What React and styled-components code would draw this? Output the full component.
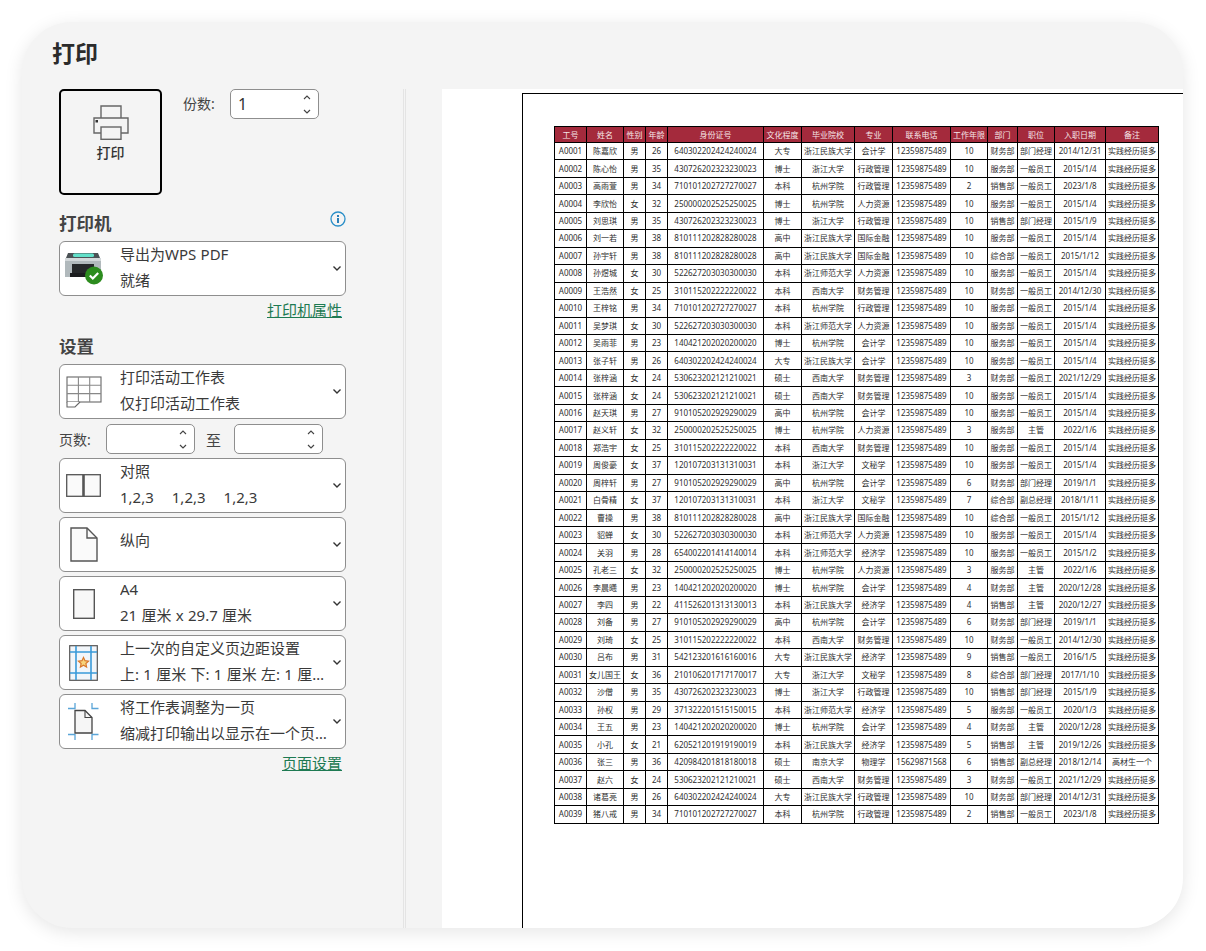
import React from 'react'
import styled, { createGlobalStyle } from 'styled-components'

const GlobalStyle = createGlobalStyle`
  html, body {
    margin: 0;
    padding: 0;
    background: #fff;
    overflow: hidden;
  }
  * {
    box-sizing: border-box;
  }
  body {
    font-family: "Noto Sans", "Noto Sans CJK SC", sans-serif;
    color: #333;
  }
`

const Win = styled.div`
  display: flex;
  width: 1161px;
  height: 906px;
  margin: 22px 0 23px 22px;
  background: #f4f4f4;
  border-radius: 50px;
  overflow: hidden;
  box-shadow: 0 4px 18px rgba(0, 0, 0, 0.1);
`

const Side = styled.aside`
  flex: none;
  width: 381px;
  padding: 15px 0 0 37px;
`

const Title = styled.h1`
  margin: 0 0 19px -7px;
  font-size: 23px;
  line-height: 33px;
  font-weight: 700;
  color: #2b2b2b;
`

const TopRow = styled.div`
  display: flex;
  align-items: flex-start;
`

const PrintButton = styled.button`
  display: flex;
  flex-direction: column;
  align-items: center;
  width: 103px;
  height: 106px;
  padding: 14px 0 0;
  border: 2px solid #000;
  border-radius: 5px;
  background: #f4f4f4;
  font: 500 14px/20px "Noto Sans", "Noto Sans CJK SC", sans-serif;
  color: #333;
  svg {
    margin-bottom: 3px;
  }
`

const Copies = styled.div`
  display: flex;
  align-items: flex-start;
  margin-left: 21px;
  font-size: 14px;
  line-height: 30px;
  color: #444;
  > span {
    width: 47px;
  }
`

const Spin = styled.div`
  display: flex;
  align-items: center;
  justify-content: space-between;
  width: 89px;
  height: 30px;
  padding: 0 7px;
  border: 1px solid #8e8e8e;
  border-radius: 5px;
  background: #fff;
  font-size: 16px;
  color: #333;
`

const SpinArrows = styled.div`
  display: flex;
  flex-direction: column;
  gap: 9px;
  margin-left: auto;
  svg {
    display: block;
  }
`

const SectionHead = styled.div`
  display: flex;
  align-items: center;
  justify-content: space-between;
  width: 287px;
  margin-top: ${p => p.$top}px;
  margin-bottom: 5px;
  font-size: 17.5px;
  line-height: 26px;
  font-weight: 700;
  color: #444;
  svg {
    margin-top: -9px;
  }
`

const SelectBox = styled.div`
  display: flex;
  align-items: center;
  width: 287px;
  height: 55px;
  margin-top: 4px;
  border: 1px solid #8e8e8e;
  border-radius: 6px;
  background: #fff;
`

const IconSlot = styled.div`
  flex: none;
  display: flex;
  justify-content: center;
  width: 47px;
  margin-right: 13px;
`

const Lines = styled.div`
  flex: none;
  width: 210px;
  margin-bottom: ${p => (p.$single ? 10 : 4)}px;
  font-size: 15px;
  line-height: 26px;
  word-spacing: 0.4px;
  color: #3a3a3a;
`

const Line = styled.div`
  white-space: nowrap;
  overflow: hidden;
  text-overflow: ellipsis;
`

const Collate = styled.div`
  display: flex;
  gap: 18px;
`

const Chevron = styled.div`
  flex: none;
  display: flex;
  margin-left: 2px;
`

const LinkRow = styled.div`
  display: flex;
  justify-content: flex-end;
  width: 283px;
  margin-top: ${p => p.$top}px;
`

const Link = styled.a`
  font-size: 15px;
  line-height: 20px;
  color: #1d7a52;
  text-decoration: underline;
`

const PagesRow = styled.div`
  display: flex;
  align-items: center;
  height: 30px;
  margin-top: 5px;
  font-size: 14px;
  color: #444;
`

const PagesLabel = styled.span`
  width: 47px;
`

const PagesTo = styled.span`
  width: 39px;
  padding-left: 11px;
  font-size: 15px;
`

const Preview = styled.main`
  flex: 1;
  min-width: 0;
  padding-top: 67px;
  overflow: hidden;
`

const PreviewPane = styled.div`
  height: 100%;
  padding-left: 36px;
  border-left: 3px double #e4e4e4;
`

const Paper = styled.div`
  height: 100%;
  padding: 4px 0 0 80px;
  background: #fff;
`

const Sheet = styled.div`
  height: 100%;
  padding: 32px 0 0 31px;
  border-top: 1px solid #000;
  border-left: 1px solid #000;
`

const Table = styled.table`
  width: 604px;
  table-layout: fixed;
  border-collapse: collapse;
  font-size: 8px;
  line-height: 10px;
  color: #2e2e2e;
`

const Th = styled.th`
  height: 16px;
  padding: 0;
  border: 1px solid #000;
  background: #a42a3c;
  color: #f6e6e8;
  font-weight: 400;
  text-align: center;
  white-space: nowrap;
`

const Td = styled.td`
  height: 17.46px;
  padding: 0;
  border: 1px solid #000;
  text-align: center;
  white-space: nowrap;
  overflow: hidden;
`

const columns = [32, 37, 22, 22, 96, 38, 53, 38, 58, 37, 30, 37, 51, 53]

const heads = ['工号', '姓名', '性别', '年龄', '身份证号', '文化程度', '毕业院校', '专业', '联系电话', '工作年限', '部门', '职位', '入职日期', '备注']

const rows = `A0001 陈嘉欣 男 26 640302202424240024 大专 浙江民族大学 会计学 12359875489 10 财务部 部门经理 2014/12/31 实践经历挺多
A0002 陈心怡 男 35 430726202323230023 博士 浙江大学 行政管理 12359875489 10 服务部 一般员工 2015/1/4 实践经历挺多
A0003 高雨萱 男 34 710101202727270027 本科 杭州学院 行政管理 12359875489 2 销售部 一般员工 2023/1/8 实践经历挺多
A0004 李欣怡 女 32 250000202525250025 博士 杭州学院 人力资源 12359875489 10 服务部 一般员工 2015/1/4 实践经历挺多
A0005 刘思琪 男 35 430726202323230023 博士 浙江大学 行政管理 12359875489 10 销售部 部门经理 2015/1/9 实践经历挺多
A0006 刘一若 男 38 810111202828280028 高中 浙江民族大学 国际金融 12359875489 10 服务部 一般员工 2015/1/4 实践经历挺多
A0007 孙宇轩 男 38 810111202828280028 高中 浙江民族大学 国际金融 12359875489 10 综合部 一般员工 2015/1/12 实践经历挺多
A0008 孙煜城 女 30 522627203030300030 本科 浙江师范大学 人力资源 12359875489 10 服务部 一般员工 2015/1/4 实践经历挺多
A0009 王浩然 女 25 310115202222220022 本科 西南大学 财务管理 12359875489 10 财务部 一般员工 2014/12/30 实践经历挺多
A0010 王梓铭 男 34 710101202727270027 本科 杭州学院 行政管理 12359875489 10 服务部 一般员工 2015/1/4 实践经历挺多
A0011 吴梦琪 女 30 522627203030300030 本科 浙江师范大学 人力资源 12359875489 10 服务部 一般员工 2015/1/4 实践经历挺多
A0012 吴雨菲 男 23 140421202020200020 博士 杭州学院 会计学 12359875489 10 服务部 一般员工 2015/1/4 实践经历挺多
A0013 张子轩 男 26 640302202424240024 大专 浙江民族大学 会计学 12359875489 10 服务部 一般员工 2015/1/4 实践经历挺多
A0014 张梓涵 女 24 530623202121210021 硕士 西南大学 财务管理 12359875489 3 财务部 一般员工 2021/12/29 实践经历挺多
A0015 张梓涵 女 24 530623202121210021 硕士 西南大学 财务管理 12359875489 10 服务部 一般员工 2015/1/4 实践经历挺多
A0016 赵天琪 男 27 910105202929290029 高中 杭州学院 会计学 12359875489 10 服务部 一般员工 2015/1/4 实践经历挺多
A0017 赵义轩 女 32 250000202525250025 博士 杭州学院 人力资源 12359875489 3 服务部 主管 2022/1/6 实践经历挺多
A0018 郑浩宇 女 25 310115202222220022 本科 西南大学 财务管理 12359875489 10 服务部 一般员工 2015/1/4 实践经历挺多
A0019 周俊豪 女 37 120107203131310031 本科 浙江大学 文秘学 12359875489 10 服务部 一般员工 2015/1/4 实践经历挺多
A0020 周梓轩 男 27 910105202929290029 高中 杭州学院 会计学 12359875489 6 财务部 部门经理 2019/1/1 实践经历挺多
A0021 白骨精 女 37 120107203131310031 本科 浙江大学 文秘学 12359875489 7 综合部 副总经理 2018/1/11 实践经历挺多
A0022 曹操 男 38 810111202828280028 高中 浙江民族大学 国际金融 12359875489 10 综合部 一般员工 2015/1/12 实践经历挺多
A0023 貂蝉 女 30 522627203030300030 本科 浙江师范大学 人力资源 12359875489 10 服务部 一般员工 2015/1/4 实践经历挺多
A0024 关羽 男 28 654002201414140014 本科 浙江师范大学 经济学 12359875489 10 服务部 一般员工 2015/1/2 实践经历挺多
A0025 孔老三 女 32 250000202525250025 博士 杭州学院 人力资源 12359875489 3 服务部 主管 2022/1/6 实践经历挺多
A0026 李晨曦 男 23 140421202020200020 博士 杭州学院 会计学 12359875489 4 财务部 主管 2020/12/28 实践经历挺多
A0027 李四 男 22 411526201313130013 本科 浙江民族大学 经济学 12359875489 4 销售部 主管 2020/12/27 实践经历挺多
A0028 刘备 男 27 910105202929290029 高中 杭州学院 会计学 12359875489 6 财务部 部门经理 2019/1/1 实践经历挺多
A0029 刘琦 女 25 310115202222220022 本科 西南大学 财务管理 12359875489 10 财务部 一般员工 2014/12/30 实践经历挺多
A0030 吕布 男 31 542123201616160016 大专 浙江民族大学 经济学 12359875489 9 销售部 一般员工 2016/1/5 实践经历挺多
A0031 女儿国王 女 36 210106201717170017 大专 浙江大学 文秘学 12359875489 8 综合部 部门经理 2017/1/10 实践经历挺多
A0032 沙僧 男 35 430726202323230023 博士 浙江大学 行政管理 12359875489 10 销售部 部门经理 2015/1/9 实践经历挺多
A0033 孙权 男 29 371322201515150015 本科 浙江师范大学 经济学 12359875489 5 服务部 一般员工 2020/1/3 实践经历挺多
A0034 王五 男 23 140421202020200020 博士 杭州学院 会计学 12359875489 4 财务部 主管 2020/12/28 实践经历挺多
A0035 小孔 女 21 620521201919190019 本科 浙江民族大学 经济学 12359875489 5 销售部 主管 2019/12/26 实践经历挺多
A0036 张三 男 36 420984201818180018 硕士 南京大学 物理学 15629871568 6 销售部 副总经理 2018/12/14 高材生一个
A0037 赵六 女 24 530623202121210021 硕士 西南大学 财务管理 12359875489 3 财务部 一般员工 2021/12/29 实践经历挺多
A0038 诸葛亮 男 26 640302202424240024 大专 浙江民族大学 行政管理 12359875489 10 财务部 部门经理 2014/12/31 实践经历挺多
A0039 猪八戒 男 34 710101202727270027 本科 杭州学院 行政管理 12359875489 2 销售部 一般员工 2023/1/8 实践经历挺多`
  .split('\n')
  .map(r => r.split(' '))

const ChevronDown = () =>
  <svg width="10" height="7" viewBox="0 0 10 7">
    <path d="M1.5 1.5 5 5l3.5-3.5" fill="none" stroke="#333" strokeWidth="1.4" />
  </svg>

const ArrowUp = () =>
  <svg width="8" height="5" viewBox="0 0 8 5">
    <path d="M1 4 4 1l3 3" fill="none" stroke="#444" strokeWidth="1.1" />
  </svg>

const ArrowDown = () =>
  <svg width="8" height="5" viewBox="0 0 8 5">
    <path d="M1 1l3 3 3-3" fill="none" stroke="#444" strokeWidth="1.2" />
  </svg>

const SpinBox = ({ value }) =>
  <Spin>
    <span>{value}</span>
    <SpinArrows>
      <ArrowUp />
      <ArrowDown />
    </SpinArrows>
  </Spin>

const PrinterOutline = () =>
  <svg width="36" height="35" viewBox="0 0 36 35" fill="none" stroke="#666" strokeWidth="1.4">
    <path d="M8 13V1h20v12" />
    <path d="M8 28H1V13h34v15h-7" />
    <rect x="8" y="22" width="20" height="12.3" fill="#f4f4f4" />
    <rect x="2.5" y="15" width="2.5" height="2.5" fill="#333" stroke="none" />
  </svg>

const PrinterColor = () =>
  <svg width="40" height="33" viewBox="0 0 40 33">
    <path d="M2 6 4 1h30l2 5z" fill="#4b5255" />
    <rect x="9" y="1.5" width="21" height="3.5" rx="1.5" fill="#62e0c9" />
    <rect x="1" y="6" width="36" height="19" fill="#b1b9bc" />
    <rect x="1" y="6" width="36" height="3" fill="#d3d8da" />
    <rect x="8" y="12" width="22" height="9" fill="#26282a" />
    <rect x="6" y="21" width="26" height="4" fill="#1b1c1e" />
    <circle cx="30" cy="23.5" r="9" fill="#2c8c1e" />
    <path d="M25.8 23.5l3 3 5.4-5.6" fill="none" stroke="#fff" strokeWidth="2.2" />
  </svg>

const InfoIcon = () =>
  <svg width="16" height="16" viewBox="0 0 16 16">
    <circle cx="8" cy="8" r="7" fill="none" stroke="#2b8fc8" strokeWidth="1.3" />
    <rect x="7" y="7" width="2" height="5" fill="#2b7fb8" />
    <rect x="7" y="4" width="2" height="2" fill="#2b7fb8" />
  </svg>

const SheetsIcon = () =>
  <svg width="36" height="32" viewBox="0 0 36 32" fill="none" stroke="#666" strokeWidth="1.1">
    <rect x="1" y="1" width="34" height="25" />
    <path d="M12.4 1v25M23.7 1v25M1 9.3h34M1 17.6h34" stroke="#888" />
    <path d="M1 26v5h8l5-5" fill="#fff" />
  </svg>

const CollateIcon = () =>
  <svg width="35" height="23" viewBox="0 0 35 23" fill="#fafafa" stroke="#555" strokeWidth="1.3">
    <rect x="0.7" y="0.7" width="33.6" height="21.6" />
    <path d="M17.5 0.7v21.6" strokeWidth="2.6" />
  </svg>

const PortraitIcon = () =>
  <svg width="28" height="35" viewBox="0 0 28 35" fill="#fafafa" stroke="#555" strokeWidth="1.4">
    <path d="M1 1h16l10 10v23H1z" />
    <path d="M17 1v10h10" fill="none" />
  </svg>

const SheetSizeIcon = () =>
  <svg width="22" height="30" viewBox="0 0 22 30" fill="#f8f8f8" stroke="#555" strokeWidth="1.4">
    <rect x="0.7" y="0.7" width="20.6" height="28.6" />
  </svg>

const MarginsIcon = () =>
  <svg width="29" height="36" viewBox="0 0 29 36" fill="none">
    <rect x="0.7" y="0.7" width="27.6" height="34.6" fill="#f2f6fa" stroke="#555" strokeWidth="1.2" />
    <path d="M7 1v34M22 1v34M1 7h27M1 28h27" stroke="#3a9ad9" strokeWidth="1.6" />
    <path d="M14.5 12.5l1.5 3.2 3.5.4-2.6 2.4.7 3.5-3.1-1.7-3.1 1.7.7-3.5-2.6-2.4 3.5-.4z" fill="#f7d47c" stroke="#d9772b" strokeWidth="1.2" />
  </svg>

const FitIcon = () =>
  <svg width="31" height="37" viewBox="0 0 31 37" fill="none">
    <path d="M0 5.5h7V0M24 0v5.5h6.5M0 31.5h7V37M24 37v-5.5h6.5" stroke="#5aa5d8" strokeWidth="1.3" />
    <path d="M7 7.5h10l7 7v15.5H7z" fill="#f6f6f6" stroke="#444" strokeWidth="1.3" />
    <path d="M17 7.5v7h7" stroke="#444" strokeWidth="1.1" />
  </svg>

const Select = ({ icon, single, children }) =>
  <SelectBox>
    <IconSlot>{icon}</IconSlot>
    <Lines $single={single}>{children}</Lines>
    <Chevron><ChevronDown /></Chevron>
  </SelectBox>

export default function App() {
  return (
    <Win>
      <GlobalStyle />
      <Side>
        <Title>打印</Title>
        <TopRow>
          <PrintButton>
            <PrinterOutline />
            打印
          </PrintButton>
          <Copies>
            <span>份数:</span>
            <SpinBox value="1" />
          </Copies>
        </TopRow>

        <SectionHead $top={15}>
          打印机
          <InfoIcon />
        </SectionHead>
        <Select icon={<PrinterColor />}>
          <Line>导出为WPS PDF</Line>
          <Line>就绪</Line>
        </Select>
        <LinkRow $top={4}><Link>打印机属性</Link></LinkRow>

        <SectionHead $top={13}>设置</SectionHead>
        <Select icon={<SheetsIcon />}>
          <Line>打印活动工作表</Line>
          <Line>仅打印活动工作表</Line>
        </Select>
        <PagesRow>
          <PagesLabel>页数:</PagesLabel>
          <SpinBox value="" />
          <PagesTo>至</PagesTo>
          <SpinBox value="" />
        </PagesRow>
        <Select icon={<CollateIcon />}>
          <Line>对照</Line>
          <Collate>
            <span>1,2,3</span>
            <span>1,2,3</span>
            <span>1,2,3</span>
          </Collate>
        </Select>
        <Select icon={<PortraitIcon />} single>
          <Line>纵向</Line>
        </Select>
        <Select icon={<SheetSizeIcon />}>
          <Line>A4</Line>
          <Line>21 厘米 x 29.7 厘米</Line>
        </Select>
        <Select icon={<MarginsIcon />}>
          <Line>上一次的自定义页边距设置</Line>
          <Line>上: 1 厘米 下: 1 厘米 左: 1 厘米 右: 1 厘米</Line>
        </Select>
        <Select icon={<FitIcon />}>
          <Line>将工作表调整为一页</Line>
          <Line>缩减打印输出以显示在一个页面上</Line>
        </Select>
        <LinkRow $top={4}><Link>页面设置</Link></LinkRow>
      </Side>

      <Preview>
        <PreviewPane>
          <Paper>
            <Sheet>
              <Table>
                <colgroup>
                  {columns.map((w, i) => <col key={i} style={{ width: w }} />)}
                </colgroup>
                <thead>
                  <tr>
                    {heads.map(h => <Th key={h}>{h}</Th>)}
                  </tr>
                </thead>
                <tbody>
                  {rows.map(row =>
                    <tr key={row[0]}>
                      {row.map((cell, i) => <Td key={i}>{cell}</Td>)}
                    </tr>
                  )}
                </tbody>
              </Table>
            </Sheet>
          </Paper>
        </PreviewPane>
      </Preview>
    </Win>
  )
}
